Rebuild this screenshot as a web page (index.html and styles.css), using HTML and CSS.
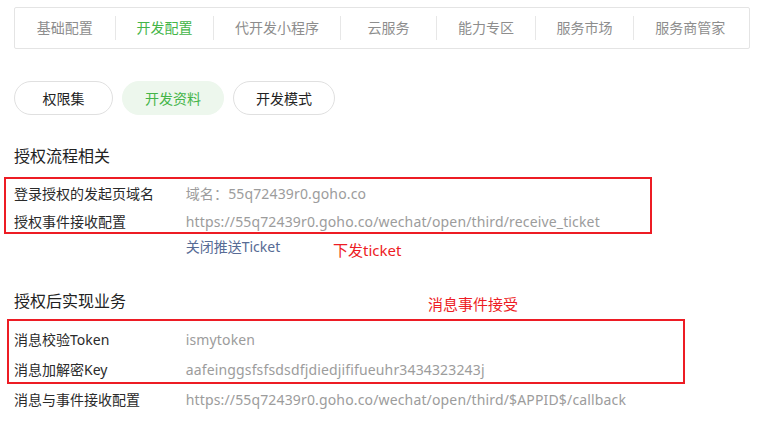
FILE: index.html
```html
<!DOCTYPE html>
<html lang="zh-CN">
<head>
<meta charset="utf-8">
<title>开发配置</title>
<link rel="stylesheet" href="styles.css">
</head>
<body>
<div class="page">
  <nav class="tabs">
    <span class="tab">基础配置</span>
    <span class="tab active">开发配置</span>
    <span class="tab">代开发小程序</span>
    <span class="tab">云服务</span>
    <span class="tab">能力专区</span>
    <span class="tab">服务市场</span>
    <span class="tab">服务商管家</span>
  </nav>

  <div class="pills">
    <span class="pill">权限集</span>
    <span class="pill active">开发资料</span>
    <span class="pill">开发模式</span>
  </div>

  <section class="section s1">
    <h2 class="title">授权流程相关</h2>
    <div class="row"><span class="label">登录授权的发起页域名</span><span class="value">域名：55q72439r0.goho.co</span></div>
    <div class="row"><span class="label">授权事件接收配置</span><span class="value">https://55q72439r0.goho.co/wechat/open/third/receive_ticket</span></div>
    <div class="row sub"><span class="label"></span><span class="link">关闭推送Ticket</span></div>
    <div class="mark mark1"></div>
    <span class="note note1">下发ticket</span>
  </section>

  <section class="section s2">
    <h2 class="title">授权后实现业务</h2>
    <div class="row"><span class="label">消息校验Token</span><span class="value">ismytoken</span></div>
    <div class="row"><span class="label">消息加解密Key</span><span class="value">aafeinggsfsfsdsdfjdiedjififueuhr3434323243j</span></div>
    <div class="row"><span class="label">消息与事件接收配置</span><span class="value">https://55q72439r0.goho.co/wechat/open/third/$APPID$/callback</span></div>
    <div class="mark mark2"></div>
    <span class="note note2">消息事件接受</span>
  </section>
</div>
</body>
</html>
```
FILE: styles.css
```css
* { box-sizing: border-box; }
html, body { margin: 0; padding: 0; background: #fff; }
body {
  font-family: "Noto Sans", "Noto Sans CJK SC", sans-serif;
  font-size: 14px;
  color: #353535;
}
.page { padding: 7px 0 0 14px; position: relative; }

.tabs {
  display: flex;
  align-items: center;
  width: 736px;
  height: 42px;
  border: 1px solid #e4e4e4;
  border-radius: 2px;
}
.tab {
  min-width: 96.3px;
  padding: 0 20.8px;
  text-align: center;
  color: #8d8d8d;
  line-height: 24px;
  border-left: 1px solid #e7e7e7;
}
.tab:first-child { border-left: none; min-width: 99.7px; }
.tab.active { color: #44b549; }

.pills {
  display: flex;
  gap: 9px;
  margin-top: 32px;
}
.pill {
  min-width: 101px;
  height: 34px;
  padding: 0 22px;
  border: 1px solid #e0e0e0;
  border-radius: 17px;
  display: flex;
  align-items: center;
  justify-content: center;
  color: #222;
}
.pill:first-child { min-width: 99px; }
.pill.active {
  background: #edf7ed;
  border-color: #edf7ed;
  color: #44b549;
}

.section { position: relative; }
.title {
  margin: 0;
  font-size: 16px;
  font-weight: normal;
  line-height: 24px;
  color: #222;
}
.s1 { margin-top: 29px; }
.s1 .title { margin-bottom: 12px; }
.s1 .row { line-height: 28px; }
.s1 .row.sub { line-height: 22px; }
.s2 { margin-top: 31px; }
.s2 .title { margin-bottom: 12px; }
.s2 .row { line-height: 30px; }

.row { display: flex; white-space: nowrap; }
.label { width: 171.7px; flex: none; color: #2a2a2a; }
.value { color: #9c9c9c; letter-spacing: 0.15px; }
.link { color: #576b95; }

.mark {
  position: absolute;
  border: 2px solid #ed1c24;
  pointer-events: none;
}
.mark1 { left: -10px; top: 33px; width: 648px; height: 57px; }
.mark2 { left: -7px; top: 30px; width: 678px; height: 65px; }

.note {
  position: absolute;
  color: #ed1c24;
  font-size: 15px;
  line-height: 20px;
  white-space: nowrap;
}
.note1 { left: 319px; top: 96px; }
.note2 { left: 414px; top: 5px; }
```
